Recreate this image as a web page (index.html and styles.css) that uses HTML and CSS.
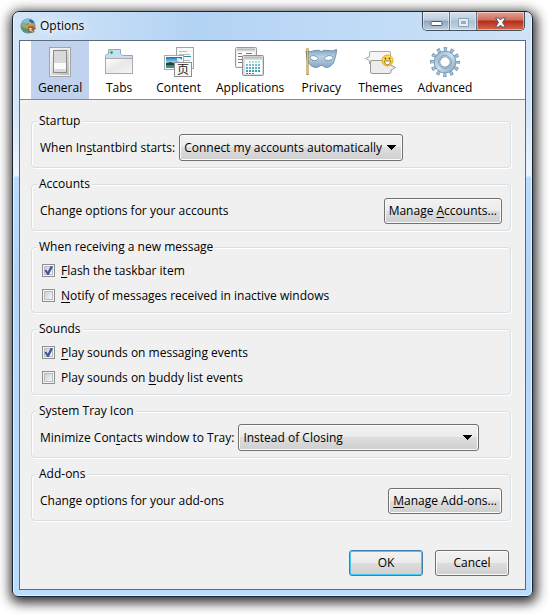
FILE: index.html
```html
<!DOCTYPE html>
<html lang="en">
<head>
<meta charset="utf-8">
<title>Options</title>
<link rel="stylesheet" href="styles.css">
</head>
<body>
<main class="window">
  <header class="titlebar">
    <svg class="app-icon" width="16" height="16" viewBox="0 0 16 16" aria-hidden="true">
      <circle cx="8" cy="8" r="7.5" fill="#3f8fb5"/>
      <path d="M1 6Q4 0 10 1L9 5L6 6L4 5Z" fill="#7cc0dc"/>
      <path d="M1 6L4 5L7 7L11 4L14 5L15 9L10 12L7 15L3 12Z" fill="#b3a25c"/>
      <path d="M2 9L6 10L8 13L6 15L3 13Z" fill="#4e9a7a"/>
      <path d="M9 2Q13 1 14 5L11 5Z" fill="#2668a0"/>
      <path d="M8 9Q12 7 15 9L16 11L13 12L15 14L11 15L7 13Z" fill="#a45f32"/>
      <path d="M9 10L12 10L11 12L14 14L10 13Z" fill="#f3d6b3"/>
      <circle cx="10" cy="5" r="1" fill="#efb35b"/>
    </svg>
    <h1 class="title">Options</h1>
    <div class="controls">
      <button class="control" type="button" aria-label="Minimize">
        <svg width="13" height="11" viewBox="0 0 13 11"><rect x="1" y="4.500" width="11" height="4" rx="1" fill="#fff" stroke="#535666"/></svg>
      </button>
      <button class="control" type="button" aria-label="Maximize" disabled>
        <svg width="13" height="11" viewBox="0 0 13 11"><path fill="#e3edf5" stroke="#8fa0ae" fill-rule="evenodd" d="M1.500 1.500H11.500V9.500H1.500ZM4.500 4.500V6.500H8.500V4.500Z"/></svg>
      </button>
      <button class="control control-close" type="button" aria-label="Close">
        <svg width="13" height="11" viewBox="0 0 13 11"><path d="M1.500 1H4.800L6.500 3L8.200 1H11.500L8.500 5.500L11.500 10H8.200L6.500 8L4.800 10H1.500L4.500 5.500Z" fill="#fff" stroke="#535666"/></svg>
      </button>
    </div>
  </header>

  <div class="client">
    <nav class="toolbar" aria-label="Categories">
      <button class="tab tab-active" type="button">
        <svg width="32" height="32" viewBox="0 0 32 32" aria-hidden="true">
          <defs><linearGradient id="plate" x2="1" y2="1"><stop stop-color="#fafafa"/><stop offset="1" stop-color="#bbb"/></linearGradient></defs>
          <rect x="5.500" y="1.500" width="21" height="29" fill="#f2f2f2" stroke="#a4a4a4"/>
          <rect x="7" y="3" width="18" height="26" fill="url(#plate)"/>
          <path d="M9 24H23V27H9Z" fill="#666"/>
          <rect x="9.500" y="4.500" width="13" height="22" fill="#d9d9d9" stroke="#8a8a8a"/>
          <path d="M10 17H22V24L20 23H12L10 24Z" fill="#fafafa"/>
        </svg>
        <span>General</span>
      </button>
      <button class="tab" type="button">
        <svg width="32" height="32" viewBox="0 0 32 32" aria-hidden="true">
          <defs><linearGradient id="folder" x2="1" y2="1"><stop stop-color="#fff"/><stop offset=".5" stop-color="#e8e8e8"/><stop offset="1" stop-color="#f7f7f7"/></linearGradient></defs>
          <path d="M2.500 10.500V9.500L5.500 7.500V3.500H17.500V7.500L19.500 9.500H29.500V27.500H2.500Z" fill="#c9def5" stroke="#91a6bb"/>
          <rect x="2.500" y="12.500" width="27" height="15" fill="url(#folder)" stroke="#aaa"/>
          <circle cx="8.500" cy="6.500" r="2" fill="#a2e6ae"/><circle cx="8.500" cy="6.500" r="1.200" fill="#1ca83b"/>
        </svg>
        <span>Tabs</span>
      </button>
      <button class="tab" type="button">
        <svg width="32" height="32" viewBox="0 0 32 32" aria-hidden="true">
          <defs><linearGradient id="sky" x2="0" y2="1"><stop stop-color="#176eb4"/><stop offset=".5" stop-color="#a3dcf4"/><stop offset=".6" stop-color="#3c7050"/><stop offset="1" stop-color="#3894b4"/></linearGradient></defs>
          <rect x="13.500" y="1.500" width="17" height="21" fill="#f8f8f8" stroke="#a2a2a2"/>
          <path d="M16 5.500H24M16 8.500H27M16 14.500H27M16 17.500H27" stroke="#bbb"/><path d="M16 10.500H28" stroke="#39899f"/>
          <rect x="1.500" y="9.500" width="19" height="14" fill="#fff" stroke="#aaa"/>
          <rect x="3" y="11" width="16" height="11" fill="url(#sky)"/>
          <path d="M3 17L8 16L13 18L19 17V18L11 19L3 19Z" fill="#174a35"/>
          <path d="M14 12Q18 12 19 14V17Q15 16 14 14Z" fill="#e1f7ff"/>
          <rect x="11.500" y="16.500" width="17" height="14" fill="#f8f8f8" stroke="#8e8e8e"/>
          <text class="glyph" x="20" y="28" text-anchor="middle">页</text>
        </svg>
        <span>Content</span>
      </button>
      <button class="tab" type="button">
        <svg width="32" height="32" viewBox="0 0 32 32" aria-hidden="true">
          <rect x="1.500" y="1.500" width="21" height="20" rx="1" fill="#eee" stroke="#999"/>
          <path d="M3 3.500H21" stroke="#bbb" stroke-width="2"/><rect x="3" y="6" width="17" height="14" fill="#fff"/>
          <path d="M4 7.500H8M4 10.500H8M4 13.500H8M4 16.500H8M12 7.500H18" stroke="#777"/>
          <rect x="8.500" y="9.500" width="21" height="20" rx="1" fill="#ddd" stroke="#8f8f8f"/>
          <path d="M10 11.500H28" stroke="#bdbdbd" stroke-width="2"/><rect x="11" y="14" width="17" height="14" fill="#fff"/>
          <g fill="none" stroke-width="2" stroke-dasharray="2 1"><path d="M15 16H27" stroke="#acdce9"/><path d="M12 19H27" stroke="#73bfd5"/><path d="M12 22H27" stroke="#56aeca"/><path d="M12 25H27" stroke="#389ab9"/><path d="M12 27.500H20" stroke="#268bab" stroke-width="1"/></g>
        </svg>
        <span>Applications</span>
      </button>
      <button class="tab" type="button">
        <svg width="32" height="32" viewBox="0 0 32 32" aria-hidden="true">
          <defs><linearGradient id="mask" x2="0" y2="1"><stop stop-color="#7b9ebb"/><stop offset=".4" stop-color="#b9d3e8"/><stop offset="1" stop-color="#86a8c4"/></linearGradient></defs>
          <path d="M1 5Q6 6.500 10 4.500Q14 3.500 16.500 5.500Q19 3.500 23 4.500Q27 6 31.500 3.500Q31.500 8 30 12Q28.500 20 22.500 21.500Q19 21.500 17.500 19.500H15.500Q13.500 21.500 10 21.500Q4 20 2 13Z" fill="url(#mask)" stroke="#7191ac"/>
          <path d="M4.500 11Q9 7.500 13.500 12.500Q12 15 8.500 14.500Q6 14 4.500 11ZM19 12.500Q23.500 7.500 28.500 11Q27 14 24 14.500Q20.500 15 19 12.500Z" fill="#fff" stroke="#6785a0" stroke-width=".8"/>
          <path d="M2.500 2V29" stroke="#a5761d" stroke-width="2"/><path d="M2.500 2V28" stroke="#e9c04a"/>
        </svg>
        <span>Privacy</span>
      </button>
      <button class="tab" type="button">
        <svg width="32" height="32" viewBox="0 0 32 32" aria-hidden="true">
          <path d="M7 5.500H25Q26.500 5.500 26.500 7V17Q26.500 18.500 25 18.500H7Q5.500 18.500 5.500 17V14.500L1.500 12.500L5.500 10.500V7Q5.500 5.500 7 5.500Z" fill="#f5f5f5" stroke="#a8a8a8"/>
          <path d="M8 14.500H25Q26.500 14.500 26.500 16V19L31.500 21.500L27 24V26Q27 27.500 25 27.500H8Q6.500 27.500 6.500 26V16Q6.500 14.500 8 14.500Z" fill="#ececec" stroke="#999"/>
          <circle cx="23.500" cy="14.500" r="5.500" fill="#ffdb45" stroke="#e7aa13"/>
          <path d="M20 15H27Q26 19 23.500 19Q21 19 20 15Z" fill="#fff" stroke="#8a6218" stroke-width=".8"/><circle cx="21.500" cy="12.500" r=".9" fill="#543"/><circle cx="25.500" cy="12.500" r=".9" fill="#543"/>
        </svg>
        <span>Themes</span>
      </button>
      <button class="tab" type="button">
        <svg width="32" height="32" viewBox="0 0 32 32" aria-hidden="true">
          <defs><linearGradient id="gear" x2="1" y2="1"><stop stop-color="#9dbbd1"/><stop offset=".5" stop-color="#cde1f0"/><stop offset="1" stop-color="#8fb0c9"/></linearGradient></defs>
          <g fill="none">
            <circle cx="16" cy="16" r="12.500" stroke="#7798b1" stroke-width="5" stroke-dasharray="3.200 3.345" stroke-dashoffset="1.600"/>
            <circle cx="16" cy="16" r="12" stroke="#a8c6dc" stroke-width="4.500" stroke-dasharray="1.600 4.683" stroke-dashoffset=".8"/>
            <circle cx="16" cy="16" r="8" stroke="#7798b1" stroke-width="6.500"/>
            <circle cx="16" cy="16" r="8" stroke="url(#gear)" stroke-width="5"/>
            <circle cx="16" cy="16" r="6.500" stroke="#84a5be"/>
          </g>
        </svg>
        <span>Advanced</span>
      </button>
    </nav>

    <form class="pane">
      <fieldset class="group">
        <legend>Startup</legend>
        <div class="row">
          <label for="startup">When In<u>s</u>tantbird starts:</label>
          <select id="startup" class="select select-startup"><option>Connect my accounts automatically</option></select>
        </div>
      </fieldset>
      <fieldset class="group">
        <legend>Accounts</legend>
        <div class="row row-split">
          <span>Change options for your accounts</span>
          <button class="button" type="button">Manage <u>A</u>ccounts...</button>
        </div>
      </fieldset>
      <fieldset class="group group-checks">
        <legend>When receiving a new message</legend>
        <label class="check"><input type="checkbox" checked><span><u>F</u>lash the taskbar item</span></label>
        <label class="check"><input type="checkbox"><span><u>N</u>otify of messages received in inactive windows</span></label>
      </fieldset>
      <fieldset class="group group-checks">
        <legend>Sounds</legend>
        <label class="check"><input type="checkbox" checked><span><u>P</u>lay sounds on messaging events</span></label>
        <label class="check"><input type="checkbox"><span>Play sounds on <u>b</u>uddy list events</span></label>
      </fieldset>
      <fieldset class="group">
        <legend>System Tray Icon</legend>
        <div class="row">
          <label for="tray">Minimize Con<u>t</u>acts window to Tray:</label>
          <select id="tray" class="select select-tray"><option>Instead of Closing</option></select>
        </div>
      </fieldset>
      <fieldset class="group">
        <legend>Add-ons</legend>
        <div class="row row-split">
          <span>Change options for your add-ons</span>
          <button class="button" type="button"><u>M</u>anage Add-ons...</button>
        </div>
      </fieldset>
      <div class="actions">
        <button class="button button-action button-default" type="submit">OK</button>
        <button class="button button-action" type="button">Cancel</button>
      </div>
    </form>
  </div>
</main>
</body>
</html>
```
FILE: styles.css
```css
* { box-sizing: border-box; }

body {
  margin: 0;
  min-height: 100vh;
  padding: 11px 16px 17px 12px;
  display: flex;
  background: #fff;
  color: #000;
  font: 12px/16px "Open Sans", "Noto Sans", sans-serif;
}

button, select, input { font: inherit; color: inherit; margin: 0; }

.window {
  flex: 1;
  min-width: 0;
  display: flex;
  flex-direction: column;
  padding: 0 6px 6px;
  border: 1px solid #1c232b;
  border-radius: 7px 7px 6px 6px;
  background: linear-gradient(#cfe4fa 0, #d3e7fb 100px, #ecf5fe 164px, #b9dcff 165px, #b4d5f6 260px, #b9dcff 100%);
  box-shadow: inset 0 0 0 1px #e4f3ff, 1px 3px 12px 3px rgba(0, 0, 0, .8);
}

.titlebar {
  display: flex;
  height: 28px;
  margin: 0 -5px;
  padding: 0 6px;
  border-radius: 6px 6px 0 0;
  background: linear-gradient(90deg, #d3e6f9, #b3d3f4 35%, #c1dcf7 70%, #cfe2f7);
}

.app-icon { margin-top: 6px; }

.title {
  flex: 1;
  margin: 6px 0 0 4px;
  font-size: 12px;
  font-weight: 400;
  text-shadow: 0 0 6px #fff, 0 0 8px #fff;
}

.controls {
  display: flex;
  height: 19px;
  border: 1px solid #46505c;
  border-top: 0;
  border-radius: 0 0 5px 5px;
  overflow: hidden;
}

.control {
  width: 27px;
  padding: 2px 0 0;
  display: grid;
  place-items: center;
  border: 0;
  border-right: 1px solid #647384;
  background: linear-gradient(#d8e3ef, #bccbdc 45%, #91a6be 50%, #b9cfe4);
  box-shadow: inset 0 0 0 1px rgba(255, 255, 255, .45);
}

.control:disabled { background: linear-gradient(#d4e2f0, #b9cde0 45%, #a9c0d7 50%, #c3d8eb); }

.control-close {
  width: 47px;
  border: 0;
  background: linear-gradient(#e5a397, #cf6b58 45%, #b22d17 50%, #d9684b);
}

.client {
  flex: 1;
  display: flex;
  flex-direction: column;
  border: 1px solid #5b6b7c;
  background: #f0f0f0;
}

.toolbar {
  display: flex;
  gap: 1px;
  height: 59px;
  padding-left: 11px;
  border-bottom: 1px solid #898989;
  background: #fff;
}

.tab {
  display: flex;
  flex-direction: column;
  align-items: center;
  min-width: 58px;
  padding: 5px 7px 0;
  border: 0;
  background: none;
}

.tab span { margin-top: 2px; }
.tab svg { flex: none; }
.tab-active { background: #c1d2ee; }
.glyph { font: 12px "Noto Sans CJK SC", sans-serif; fill: #222; }

.pane {
  flex: 1;
  display: flex;
  flex-direction: column;
  gap: 8px;
  padding: 13px 14px 13px 11px;
}

.group {
  min-width: 0;
  margin: 0;
  padding: 5px 8px 6px;
  border: 1px solid #d5dfe5;
  border-radius: 4px;
  box-shadow: inset 1px 1px #fff, 1px 1px #fff;
}

.group-checks { padding: 3px 8px 4px; }

legend {
  margin-left: -3px;
  padding: 0 2px;
  background: #f0f0f0;
}

.row { display: flex; align-items: center; gap: 4px; height: 27px; }
.row-split { justify-content: space-between; }

u { text-decoration: underline; text-underline-offset: 2px; }

.select, .button {
  border: 1px solid #707070;
  border-radius: 3px;
  background: linear-gradient(#f2f2f2, #ebebeb 49%, #dddddd 50%, #cfcfcf);
  box-shadow: inset 0 0 0 1px #fbfbfb;
}

.select {
  appearance: none;
  height: 27px;
  padding: 0 18px 0 4px;
  background:
    conic-gradient(from -45deg at 50% 100%, #000 90deg, transparent 0) right 6px center / 9px 5px no-repeat,
    linear-gradient(#f2f2f2, #ebebeb 49%, #dddddd 50%, #cfcfcf);
}

.button { height: 26px; padding: 0 4px; white-space: nowrap; }

.select-startup { width: 224px; }
.select-tray { width: 241px; }

.check { display: flex; align-items: center; gap: 6px; height: 25px; padding-left: 2px; }

.check input {
  appearance: none;
  width: 13px;
  height: 13px;
  border: 1px solid #8e8f8f;
  background: linear-gradient(135deg, #cbcfd5, #f6f6f6) center / 7px 7px no-repeat, #f4f4f4;
  box-shadow: inset 0 0 0 1px #f4f4f4, inset 0 0 0 2px #b9bdc3;
  display: grid;
  place-items: center;
}

.check input:checked::before {
  content: "";
  width: 9px;
  height: 9px;
  background: #3f5498;
  clip-path: polygon(5% 50%, 25% 40%, 42% 65%, 75% 0, 100% 5%, 52% 100%, 38% 100%);
}

.actions {
  display: flex;
  justify-content: flex-end;
  gap: 12px;
  margin: auto 2px 0 0;
}

.button-action { width: 74px; }

.button-default {
  border-color: #3c7fb1;
  box-shadow: inset 0 0 0 1px #48c8f4;
}
```
